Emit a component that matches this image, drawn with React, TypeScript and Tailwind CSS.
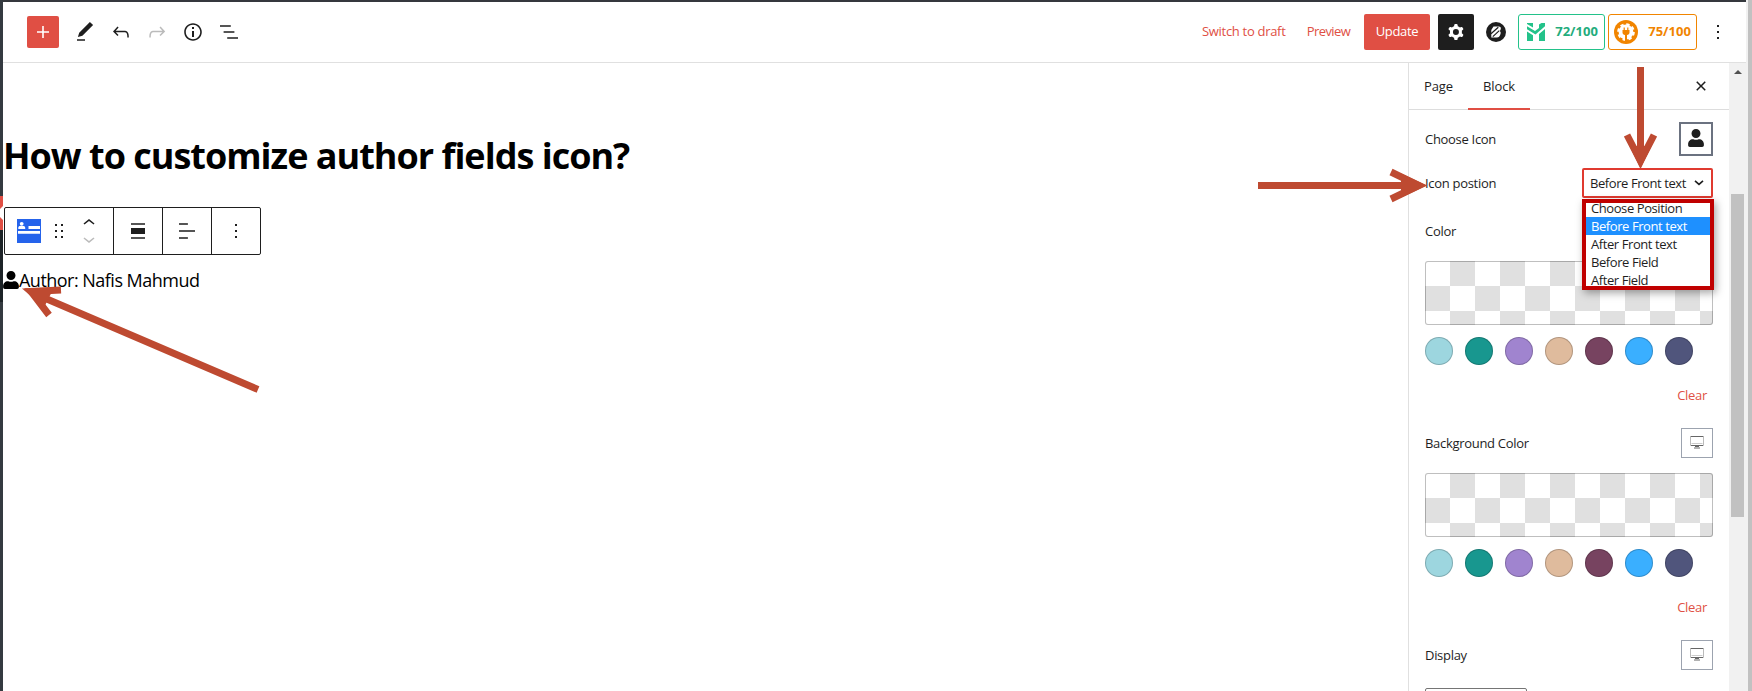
import React from "react";
import { FaUser } from "react-icons/fa";

const RED = "text-[#e04f44]";

function Icon({ d, size = 24, className = "" }: { d: string; size?: number; className?: string }) {
  return (
    <svg width={size} height={size} viewBox="0 0 24 24" fill="currentColor" fillRule="evenodd" className={`shrink-0 ${className}`}>
      <path d={d} />
    </svg>
  );
}

const PATHS = {
  plus: "M18 11.2h-5.2V6h-1.6v5.2H6v1.6h5.2V18h1.6v-5.2H18z",
  edit: "M20.1 5.1L16.9 2 6.2 12.7l-1.3 4.4 4.5-1.3L20.1 5.1zM4 20.8h8v-1.5H4v1.5z",
  undo: "M18.3 11.7c-.6-.6-1.4-.9-2.3-.9H6.7l2.9-3.3-1.1-1-4.5 5L8.5 16l1-1-2.7-2.7H16c.5 0 .9.2 1.3.5 1 1 1 3.4 1 4.5v.3h1.5v-.2c0-1.5 0-4.3-1.5-5.7z",
  redo: "M15.6 6.5l-1.1 1 2.9 3.3H8c-.9 0-1.7.3-2.3.9-1.4 1.5-1.4 4.2-1.4 5.6v.2h1.5v-.3c0-1.1 0-3.5 1-4.5.3-.3.7-.5 1.3-.5h9.2L14.5 15l1.1 1.1 4.6-4.6-4.6-5z",
  info: "M12 3.2c-4.8 0-8.8 3.9-8.8 8.8 0 4.8 3.9 8.8 8.8 8.8 4.8 0 8.8-3.9 8.8-8.8 0-4.8-4-8.8-8.8-8.8zm0 16c-4 0-7.2-3.3-7.2-7.2C4.8 8 8 4.8 12 4.8s7.2 3.3 7.2 7.2c0 4-3.2 7.2-7.2 7.2zM11 17h2v-6h-2v6zm0-8h2V7h-2v2z",
  list: "M13.8 5.2H3v1.5h10.8V5.2zm-3.6 12v1.5H21v-1.5H10.2zm7.2-6H6.6v1.5h10.8v-1.5z",
  cog: "M10.289 4.836A1 1 0 0111.275 4h1.306a1 1 0 01.987.836l.244 1.466c.787.26 1.503.679 2.108 1.218l1.393-.522a1 1 0 011.216.437l.653 1.13a1 1 0 01-.23 1.273l-1.148.944a6.025 6.025 0 010 2.435l1.149.946a1 1 0 01.23 1.272l-.653 1.13a1 1 0 01-1.216.437l-1.394-.522c-.605.54-1.32.958-2.108 1.218l-.244 1.466a1 1 0 01-.987.836h-1.306a1 1 0 01-.986-.836l-.244-1.466a5.995 5.995 0 01-2.108-1.218l-1.394.522a1 1 0 01-1.217-.436l-.653-1.131a1 1 0 01.23-1.272l1.149-.946a6.026 6.026 0 010-2.435l-1.148-.944a1 1 0 01-.23-1.272l.653-1.131a1 1 0 011.217-.437l1.393.522a5.994 5.994 0 012.108-1.218l.244-1.466zM14.929 12a3 3 0 11-6 0 3 3 0 016 0z",
  more: "M13 19h-2v-2h2v2zm0-6h-2v-2h2v2zm0-6h-2V5h2v2z",
  drag: "M8 7h2V5H8v2zm0 6h2v-2H8v2zm0 6h2v-2H8v2zm6-14v2h2V5h-2zm0 8h2v-2h-2v2zm0 6h2v-2h-2v2z",
  up: "M6.5 12.4L12 8l5.5 4.4-.9 1.2L12 10l-4.5 3.6-1-1.2z",
  down: "M17.5 11.6L12 16l-5.5-4.4.9-1.2L12 14l4.5-3.6 1 1.2z",
  alignNone: "M5 15h14V9H5v6zm0 4.8h14v-1.5H5v1.5zM5 4.2v1.5h14V4.2H5z",
  alignLeft: "M4 19.8h8.9v-1.5H4v1.5zm8.9-15.6H4v1.5h8.9V4.2zm-8.9 7v1.5h16v-1.5H4z",
  close: "M12 13.06l3.712 3.713 1.061-1.06L13.061 12l3.712-3.712-1.06-1.06L12 10.938 8.288 7.227l-1.061 1.06L10.939 12l-3.712 3.712 1.06 1.061L12 13.061z",
};

function ToolButton({ d, className = "" }: { d: string; className?: string }) {
  return (
    <button className={`flex h-9 w-9 items-center justify-center ${className}`}>
      <Icon d={d} />
    </button>
  );
}

function ZLogo() {
  return (
    <svg width="20" height="20" viewBox="0 0 20 20" className="ml-3 shrink-0">
      <circle cx="10" cy="10" r="10" fill="#1e1e1e" />
      <path d="M7.500 4.500h5.200c1.800 0 2.600 1.300 2 2.800l-.8 2c.9.600 1 1.500.6 2.700l-.6 1.600c-.5 1.300-1.500 2-2.800 2H5.300V8z" fill="#fff" />
      <path d="M5 11.800l7.300-6.600M6.800 14.600l6.500-6" stroke="#1e1e1e" strokeWidth="1.200" />
    </svg>
  );
}

function GreenLogo() {
  return (
    <svg width="18" height="18" viewBox="0 0 18 18" className="shrink-0" fill="#23c28a">
      <path d="M0 0h6v4.500L0 1zM0 3.200l8 4.800 4-3V1.500L14.500 0H18v3.200l-9.500 8.300L0 6.200zM0 8.500l6 3.700V18H0zM12 11l6-5v12h-6z" />
    </svg>
  );
}

function OrangeLogo() {
  return (
    <svg width="24" height="24" viewBox="0 0 24 24" className="shrink-0">
      <circle cx="12" cy="12" r="12" fill="#f18500" />
      <circle cx="12" cy="12" r="7.4" fill="#fff" />
      <circle cx="12" cy="12" r="7.800" fill="none" stroke="#fff" strokeWidth="2" strokeDasharray="3.400 2.726" />
      <path d="M9.600 7.500h1.200V10h2.400V7.500h1.200V10h1.100v2.400c0 1.400-1.100 2.300-2.500 2.600V21h-2v-6c-1.400-.3-2.500-1.200-2.500-2.600V10h1.100z" fill="#f18500" />
    </svg>
  );
}

function Header() {
  return (
    <header className="flex h-[61px] shrink-0 items-center justify-between border-b border-[#e0e0e0] pr-[10px] pl-6 text-[#1e1e1e]">
      <div className="flex items-center">
        <button className="mr-2 flex h-8 w-8 items-center justify-center rounded-[2px] bg-[#e04f44] text-white">
          <Icon d={PATHS.plus} />
        </button>
        <ToolButton d={PATHS.edit} />
        <ToolButton d={PATHS.undo} />
        <ToolButton d={PATHS.redo} className="text-[#bbb]" />
        <ToolButton d={PATHS.info} />
        <ToolButton d={PATHS.list} />
      </div>
      <div className="flex items-center text-[13px]">
        <button className={`w-[84px] whitespace-nowrap text-left tracking-[-0.3px] ${RED}`}>Switch to draft</button>
        <button className={`ml-5 w-[45px] tracking-[-0.55px] ${RED}`}>Preview</button>
        <button className="ml-[13px] h-9 w-[66px] rounded-[2px] bg-[#e04f44] tracking-[-0.3px] text-white">Update</button>
        <button className="ml-2 flex h-9 w-9 items-center justify-center rounded-[2px] bg-[#1e1e1e] text-white">
          <Icon d={PATHS.cog} />
        </button>
        <ZLogo />
        <div className="ml-3 flex h-9 w-[87px] items-center justify-between rounded-[3px] border border-[#23c28a] pr-[6px] pl-2 font-bold text-[#23ac7c]">
          <GreenLogo />
          <span className="tracking-[0.05px]">72/100</span>
        </div>
        <div className="ml-[3px] flex h-9 w-[89px] items-center justify-between rounded-[3px] border border-[#f18500] pr-[5px] pl-[5px] font-bold text-[#f18500]">
          <OrangeLogo />
          <span className="tracking-[0.05px]">75/100</span>
        </div>
        <button className="ml-[3px] flex h-9 w-9 items-center justify-center">
          <Icon d={PATHS.more} />
        </button>
      </div>
    </header>
  );
}

function BlockToolbar() {
  return (
    <div className="ml-px flex h-12 w-[257px] rounded-[2px] border border-[#1e1e1e] text-[#1e1e1e]">
      <div className="flex w-[109px] items-center border-r border-[#1e1e1e] pl-3">
        <svg width="24" height="24" viewBox="0 0 24 24">
          <path fill="#2563eb" d="M0 0h24v24H0z" />
          <circle cx="4.7" cy="4.8" r="1.9" fill="#fff" />
          <path fill="#fff" d="M1.3 10V8.7c0-1 .8-1.6 2-1.6h2.9c1.2 0 2 .6 2 1.6V10zM11.5 7H23v3H11.5zM1 12h22v2.8H1z" />
        </svg>
        <Icon d={PATHS.drag} className="ml-[6px]" />
        <div className="ml-[6px] flex w-6 flex-col">
          <Icon d={PATHS.up} className="mt-[-1px] mb-[-8px]" />
          <Icon d={PATHS.down} className="text-[#bbb]" />
        </div>
      </div>
      <div className="flex w-[49px] items-center justify-center border-r border-[#1e1e1e]"><Icon d={PATHS.alignNone} /></div>
      <div className="flex w-[49px] items-center justify-center border-r border-[#1e1e1e]"><Icon d={PATHS.alignLeft} /></div>
      <div className="flex flex-1 items-center justify-center"><Icon d={PATHS.more} /></div>
    </div>
  );
}

const SWATCHES = ["bg-[#9dd6df]", "bg-[#18978f]", "bg-[#a084cf]", "bg-[#dfbb9d]", "bg-[#774360]", "bg-[#3aafff]", "bg-[#50557c]"];

function ColorPicker() {
  return (
    <div>
      <div className="h-16 rounded-[3px] border border-black/25 bg-[repeating-conic-gradient(#e0e0e0_0_25%,#fff_0_50%)] bg-[length:50px_50px] bg-origin-border" />
      <div className="mt-3 flex gap-3">
        {SWATCHES.map((c) => (
          <span key={c} className={`h-7 w-7 rounded-full border border-black/20 ${c}`} />
        ))}
      </div>
      <div className={`mt-[21px] flex h-[18px] items-center justify-end pt-0.5 pr-[6px] ${RED}`}>Clear</div>
    </div>
  );
}

function DeviceButton() {
  return (
    <button className="flex h-[30px] w-8 items-start justify-center border border-[#9ca3af] pt-[7px]">
      <svg width="14" height="13" viewBox="0 0 14 13" fill="none" stroke="#666">
        <path d="M.5 1v8.500h13V1" stroke="#bbb" />
        <path d="M.5.5h13M1 9.500h12M5 10.500h4M4 12h6" />
        <path d="M1.500 7.500h11" stroke="#ccc" />
      </svg>
    </button>
  );
}

const OPTIONS = ["Choose Position", "Before Front text", "After Front text", "Before Field", "After Field"];

function PositionSelect() {
  return (
    <div className="relative">
      <div className="flex h-[30px] w-[131px] items-center justify-between rounded-[2px] border-2 border-[#e03a30] pr-[7px] pl-[6px]">
        <span className="pt-px tracking-[-0.42px] whitespace-nowrap">Before Front text</span>
        <svg width="10" height="6" viewBox="0 0 10 6" fill="none" stroke="#1e1e1e" strokeWidth="1.600"><path d="M1 .8l4 3.600 4-3.600" /></svg>
      </div>
      <ul className="absolute top-[31px] left-0 z-10 h-[91px] w-[132px] overflow-hidden border-4 border-[#c00000] bg-white shadow-[2px_3px_8px_rgba(0,0,0,0.35)]">
        {OPTIONS.map((o) => (
          <li
            key={o}
            className={`h-[18px] pl-[5px] leading-[18px] tracking-[-0.42px] whitespace-nowrap first:mt-[-4px] ${o === "Before Front text" ? "bg-[#1e90ff] text-white" : ""}`}
          >
            {o}
          </li>
        ))}
      </ul>
    </div>
  );
}

function Sidebar() {
  return (
    <aside className="flex w-[321px] shrink-0 flex-col border-l border-[#e0e0e0] text-[13px] tracking-[-0.3px] text-[#1e1e1e]">
      <div className="flex h-[47px] shrink-0 items-center border-b border-[#ddd]">
        <span className="w-[59px] pt-0.5 pl-[15px] font-medium tracking-[-0.1px]">Page</span>
        <span className="-mb-px flex h-[47px] w-[62px] items-center justify-center border-b-2 border-[#e04f44] pt-0.5 font-medium tracking-[-0.1px]">Block</span>
        <Icon d={PATHS.close} className="ml-auto mr-4" />
      </div>
      <div className="flex flex-col overflow-hidden pr-4 pl-4">
        <div className="mt-3 flex h-[34px] items-center justify-between">
          <span className="pt-0.5">Choose Icon</span>
          <button className="flex h-[34px] w-[34px] items-center justify-center border-2 border-[#6b7280] pb-0.5"><FaUser size={18} /></button>
        </div>
        <div className="mt-3 flex h-[30px] items-center justify-between">
          <span className="pt-0.5">Icon postion</span>
          <PositionSelect />
        </div>
        <div className="mt-[25px] mb-5 flex h-[18px] items-center">Color</div>
        <ColorPicker />
        <div className="mt-[24px] mb-[15px] flex h-[30px] items-center justify-between">
          <span className="pt-0.5">Background Color</span>
          <DeviceButton />
        </div>
        <ColorPicker />
        <div className="mt-[24px] mb-[18px] flex h-[30px] items-center justify-between">
          <span className="pt-0.5">Display</span>
          <DeviceButton />
        </div>
        <div className="h-8 w-[102px] shrink-0 rounded-[2px] border border-[#757575]" />
      </div>
    </aside>
  );
}

function Arrows() {
  return (
    <svg className="pointer-events-none absolute inset-0 z-20" width="1752" height="691" viewBox="0 0 1752 691">
      <g fill="none" stroke="#be4a31" strokeWidth="7">
        <path d="M258 389.500L34 293.500M61 290L31 291.500L49 315" />
        <path d="M1258 185.500h160M1391 172l28 13.500l-28 13.500" />
        <path d="M1640.500 67v92M1627 135l13.500 26l13.500-26" />
      </g>
      <g fill="#be4a31">
        <path d="M22 288.500l32-1l-10 20z" />
        <path d="M1427 185.500l-26-12v24z" />
        <path d="M1640.500 169l-11-23h22z" />
      </g>
    </svg>
  );
}

export default function App() {
  return (
    <div className="relative flex h-[691px] w-[1752px] overflow-hidden bg-white font-['Open_Sans','Noto_Sans',sans-serif]">
      <div className="flex w-[3px] shrink-0 flex-col bg-[#343a40]">
        <svg width="3" height="34" viewBox="0 0 3 34" className="mt-[196px] shrink-0">
          <path d="M0 0h3v34H0z" fill="#e04f44" />
          <path d="M3 10v14L0 21v-8z" fill="#fff" />
        </svg>
        <div className="h-[72px] bg-[#1d2327]" />
      </div>
      <div className="flex w-[1743px] shrink-0 flex-col border-t-2 border-[#35383d]">
        <Header />
        <div className="flex min-h-0 flex-1">
          <main className="flex-1 text-black">
            <h1 className="mt-[66px] h-[54px] text-[36px] leading-[54px] font-bold tracking-[-1px] whitespace-nowrap">How to customize author fields icon?</h1>
            <div className="mt-[24px]"><BlockToolbar /></div>
            <div className="mt-[12px] flex h-[26px] items-center text-[18px]">
              <FaUser size={18} className="mr-[-1px] -ml-px shrink-0" />
              <span className="tracking-[-0.52px] whitespace-nowrap">Author: Nafis Mahmud</span>
            </div>
          </main>
          <Sidebar />
          <div className="flex w-[17px] shrink-0 flex-col items-center bg-[#f1f1f1]">
            <svg width="8" height="4" viewBox="0 0 8 4" className="mt-[7px]"><path d="M4 0l4 4H0z" fill="#505050" /></svg>
            <div className="mt-[120px] h-[323px] w-[13px] bg-[#c1c1c1]" />
          </div>
        </div>
      </div>
      <div className="w-[2px] shrink-0 bg-[#f1f1f1]" />
      <div className="w-1 shrink-0 bg-[#c1c1c1]" />
      <Arrows />
    </div>
  );
}
